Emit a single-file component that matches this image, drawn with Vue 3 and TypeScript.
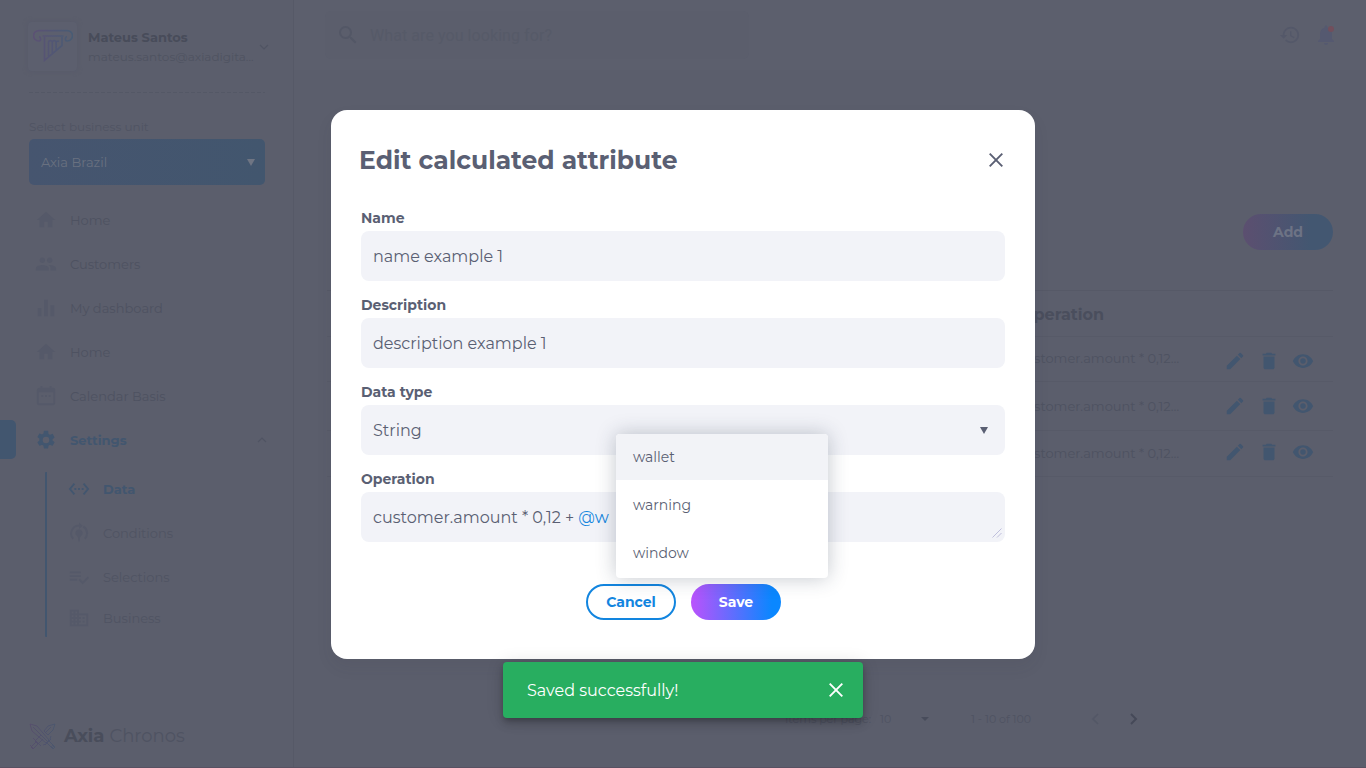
<script setup lang="ts">
interface MenuItem { label: string; icon: string; active?: boolean }

const icons: Record<string, string> = {
  home: 'M10 20v-6h4v6h5v-8h3L12 3 2 12h3v8z',
  people: 'M16 11c1.66 0 2.99-1.34 2.99-3S17.66 5 16 5c-1.66 0-3 1.34-3 3s1.34 3 3 3zm-8 0c1.66 0 2.99-1.34 2.99-3S9.66 5 8 5C6.34 5 5 6.34 5 8s1.34 3 3 3zm0 2c-2.33 0-7 1.17-7 3.5V19h14v-2.5c0-2.33-4.67-3.5-7-3.5zm8 0c-.29 0-.62.02-.97.05 1.16.84 1.97 1.97 1.97 3.45V19h6v-2.5c0-2.33-4.67-3.5-7-3.5z',
  chart: 'M3 12h4v9H3zM10 3h4v18h-4zM17 9h4v12h-4z',
  calendar: 'M9 11H7v2h2v-2zm4 0h-2v2h2v-2zm4 0h-2v2h2v-2zm3-8h-2V1h-2v2H8V1H6v2H5a3 3 0 0 0-3 3v14c0 1.1.9 2 2 2h16a2 2 0 0 0 2-2V5a2 2 0 0 0-2-2zm0 17H4V8h16v12z',
  settings: 'M19.14 12.94c.04-.3.06-.61.06-.94s-.02-.64-.07-.94l2.03-1.58c.18-.14.23-.41.12-.61l-1.92-3.32c-.12-.22-.37-.29-.59-.22l-2.39.96c-.5-.38-1.03-.7-1.62-.94l-.36-2.54A.48.48 0 0 0 13.92 2h-3.84c-.24 0-.43.17-.47.41l-.36 2.54c-.59.24-1.13.57-1.62.94l-2.39-.96c-.22-.08-.47 0-.59.22L2.74 8.47c-.12.21-.08.47.12.61l2.03 1.58c-.05.3-.09.63-.09.94s.02.64.07.94l-2.03 1.58c-.18.14-.23.41-.12.61l1.92 3.32c.12.22.37.29.59.22l2.39-.96c.5.38 1.03.7 1.62.94l.36 2.54c.05.24.24.41.48.41h3.84c.24 0 .44-.17.47-.41l.36-2.54c.59-.24 1.13-.56 1.62-.94l2.39.96c.22.08.47 0 .59-.22l1.92-3.32c.12-.22.07-.47-.12-.61l-2.01-1.58zM12 15.6A3.6 3.6 0 1 1 12 8.4a3.6 3.6 0 0 1 0 7.2z',
  data: 'M7.77 6.76 6.23 5.48.82 12l5.41 6.52 1.54-1.28L3.42 12l4.35-5.24zM7 13h2v-2H7v2zm10-2h-2v2h2v-2zm-6 2h2v-2h-2v2zm6.77-7.52-1.54 1.28L20.58 12l-4.35 5.24 1.54 1.28L23.18 12l-5.41-6.52z',
  conditions: 'M12 3V.5L16 4l-4 3.5V5a7.5 7.5 0 0 0-5.6 12.5L5 19A9.5 9.5 0 0 1 12 3zm5.5 1.2A9.5 9.5 0 0 1 19 19l-1.4-1.5a7.5 7.5 0 0 0-1.6-11.7zM12 8a4 4 0 0 1 2.2 7.3L13 17v3l-1 2-1-2v-3l-1.2-1.7A4 4 0 0 1 12 8z',
  selections: 'M14 10H2v2h12v-2zm0-4H2v2h12V6zM2 16h8v-2H2v2zm19.5-4.5L23 13l-6.99 7-4.51-4.5L13 14l3.01 3 5.49-5.5z',
  business: 'M12 7V3H2v18h20V7H12zM6 19H4v-2h2v2zm0-4H4v-2h2v2zm0-4H4V9h2v2zm0-4H4V5h2v2zm4 12H8v-2h2v2zm0-4H8v-2h2v2zm0-4H8V9h2v2zm0-4H8V5h2v2zm10 12h-8v-2h2v-2h-2v-2h2v-2h-2V9h8v10zm-2-8h-2v2h2v-2zm0 4h-2v2h2v-2z',
  search: 'M15.5 14h-.79l-.28-.27A6.471 6.471 0 0 0 16 9.5 6.5 6.5 0 1 0 9.5 16c1.61 0 3.09-.59 4.23-1.57l.27.28v.79l5 4.99L20.49 19l-4.99-5zm-6 0C7.01 14 5 11.99 5 9.5S7.01 5 9.5 5 14 7.01 14 9.5 11.99 14 9.5 14z',
  history: 'M13 3a9 9 0 0 0-9 9H1l3.89 3.89.07.14L9 12H6c0-3.87 3.13-7 7-7s7 3.13 7 7-3.13 7-7 7c-1.93 0-3.68-.79-4.94-2.06l-1.42 1.42A8.954 8.954 0 0 0 13 21a9 9 0 0 0 0-18zm-1 5v5l4.28 2.54.72-1.21-3.5-2.08V8H12z',
  bell: 'M12 22c1.1 0 2-.9 2-2h-4c0 1.1.89 2 2 2zm6-6v-5c0-3.07-1.64-5.64-4.5-6.32V4c0-.83-.67-1.5-1.5-1.5s-1.5.67-1.5 1.5v.68C7.63 5.36 6 7.92 6 11v5l-2 2v1h16v-1l-2-2z',
  edit: 'M3 17.25V21h3.75L17.81 9.94l-3.75-3.75L3 17.25zM20.71 7.04a.996.996 0 0 0 0-1.41l-2.34-2.34a.996.996 0 0 0-1.41 0l-1.83 1.83 3.75 3.75 1.83-1.83z',
  trash: 'M6 19c0 1.1.9 2 2 2h8c1.1 0 2-.9 2-2V7H6v12zM19 4h-3.5l-1-1h-5l-1 1H5v2h14V4z',
  eye: 'M12 4.5C7 4.5 2.73 7.61 1 12c1.73 4.39 6 7.5 11 7.5s9.27-3.11 11-7.5c-1.73-4.39-6-7.5-11-7.5zM12 17c-2.76 0-5-2.24-5-5s2.24-5 5-5 5 2.24 5 5-2.24 5-5 5zm0-8a3 3 0 1 0 0 6 3 3 0 0 0 0-6z',
}

const menu: MenuItem[] = [
  { label: 'Home', icon: 'home' },
  { label: 'Customers', icon: 'people' },
  { label: 'My dashboard', icon: 'chart' },
  { label: 'Home', icon: 'home' },
  { label: 'Calendar Basis', icon: 'calendar' },
  { label: 'Settings', icon: 'settings', active: true },
]
const submenu: MenuItem[] = [
  { label: 'Data', icon: 'data', active: true },
  { label: 'Conditions', icon: 'conditions' },
  { label: 'Selections', icon: 'selections' },
  { label: 'Business', icon: 'business' },
]
const fields = [
  { label: 'Name', value: 'name example 1', kind: 'text' },
  { label: 'Description', value: 'description example 1', kind: 'text' },
  { label: 'Data type', value: 'String', kind: 'select' },
  { label: 'Operation', value: 'customer.amount * 0,12 +', kind: 'area' },
]
const suggestions = ['wallet', 'warning', 'window']
const rowActions = ['edit', 'trash', 'eye']
</script>

<template>
  <div class="app">
    <aside class="sidebar">
      <div class="profile">
        <div class="avatar">
          <svg width="40" height="34" viewBox="0 0 40 34" fill="none" stroke="url(#pillar)" stroke-width="1.7">
            <defs>
              <linearGradient id="pillar" gradientUnits="userSpaceOnUse" x1="0" x2="40" y1="0" y2="0"><stop offset="0" stop-color="#5c5174" /><stop offset="1" stop-color="#485c74" /></linearGradient>
            </defs>
            <path d="M6 7.5c2 .5 2.500 4.500-.5 4.500a5.200 5.200 0 0 1 .5-10.400h28a5.200 5.200 0 0 1 .5 10.400c-3 0-2.500-4-.5-4.500M9.500 7h21M11.500 8v23.500l17.500-15V8M15.500 27V13.500a1.900 1.900 0 0 1 3.800 0V24M19.300 22V13.500a1.900 1.900 0 0 1 3.800 0V21M23.100 18V13.500a1.900 1.900 0 0 1 3 -1" />
          </svg>
        </div>
        <div class="who">
          <div class="who-name">Mateus Santos</div>
          <div class="who-mail">mateus.santos@axiadigita...</div>
        </div>
        <svg class="profile-chevron" width="10" height="8" viewBox="0 0 10 8"><path d="M1 2l4 4 4-4" fill="none" stroke="#505463" stroke-width="1.2" /></svg>
      </div>
      <div class="dashes"></div>
      <div class="unit-label">Select business unit</div>
      <div class="unit">
        <span>Axia Brazil</span>
        <svg width="8" height="7" viewBox="0 0 8 7"><path d="M0 0h8L4 7z" fill="#6f7583" /></svg>
      </div>
      <nav class="menu">
        <div v-for="(item, i) in menu" :key="i" class="item" :class="{ active: item.active }">
          <svg class="icon" viewBox="0 0 24 24"><path :d="icons[item.icon]" /></svg>
          <span>{{ item.label }}</span>
          <svg v-if="item.active" class="caret" width="10" height="8" viewBox="0 0 10 8"><path d="M1 6l4-4 4 4" fill="none" stroke="#505463" stroke-width="1.2" /></svg>
        </div>
      </nav>
      <div class="submenu">
        <div v-for="item in submenu" :key="item.label" class="subitem" :class="{ active: item.active }">
          <svg class="icon" viewBox="0 0 24 24"><path :d="icons[item.icon]" /></svg>
          <span>{{ item.label }}</span>
        </div>
      </div>
      <div class="brand">
        <svg width="27" height="27" viewBox="0 0 27 27" fill="none" stroke="url(#swords)" stroke-width=".9">
          <defs>
            <linearGradient id="swords" x1="0" x2="1"><stop offset="0" stop-color="#564d6c" /><stop offset="1" stop-color="#4a566e" /></linearGradient>
          </defs>
          <path d="M1 1l7 2 12 14-3 3L3 8zM4 4l14 14M26 1l-7 2-4 5 4 4 5-5zM22 4l-6 6M12 12l-6 6 3 3 5-5M16 22l6-6M17 19l6 6 2-2-6-6M4 15l8 8M7 19l-5 5 2 2 5-5M22 23l2 3 2-2-3-2M1 22l4 4M14 22l3-1M21 16l1-3" />
        </svg>
        <b>Axia</b><span>Chronos</span>
      </div>
    </aside>

    <main class="page">
      <header class="topbar">
        <div class="search">
          <svg width="24" height="24" viewBox="0 0 24 24"><path :d="icons.search" /></svg>
          <span>What are you looking for?</span>
        </div>
        <div class="top-icons">
          <svg width="22" height="22" viewBox="0 0 24 24"><path :d="icons.history" /></svg>
          <div class="bell">
            <svg width="24" height="24" viewBox="0 0 24 24"><path :d="icons.bell" /></svg>
            <i class="dot"></i>
          </div>
        </div>
      </header>
      <div class="toolbar"><button class="add">Add</button></div>
      <div class="table">
        <div class="thead">Operation</div>
        <div v-for="n in 3" :key="n" class="trow" :class="'trow-' + n">
          <span class="cell">customer.amount * 0,12…</span>
          <span class="actions">
            <svg v-for="a in rowActions" :key="a" width="22" height="22" viewBox="0 0 24 24"><path :d="icons[a]" /></svg>
          </span>
        </div>
      </div>
      <footer class="pager">
        <span class="per">Items per page:</span>
        <span class="ten">10</span>
        <svg class="drop" width="8" height="4" viewBox="0 0 8 4"><path d="M0 0h8L4 4z" fill="#484c5b" /></svg>
        <span class="range">1 - 10 of 100</span>
        <svg class="prev" width="8" height="12" viewBox="0 0 8 12"><path d="M7 1L2 6l5 5" fill="none" stroke="#535766" stroke-width="1.6" /></svg>
        <svg class="next" width="8" height="12" viewBox="0 0 8 12"><path d="M1 1l5 5-5 5" fill="none" stroke="#454958" stroke-width="1.9" /></svg>
      </footer>
    </main>

    <section class="modal">
      <div class="modal-head">
        <h1>Edit calculated attribute</h1>
        <svg width="14" height="14" viewBox="0 0 14 14"><path d="M.7.7l12.600 12.600M13.300.7L.7 13.300" stroke="#5a5f73" stroke-width="1.9" /></svg>
      </div>
      <div class="form">
        <div v-for="f in fields" :key="f.label" class="field">
          <div class="label">{{ f.label }}</div>
          <div class="control">
            <span>{{ f.value }}</span>
            <span v-if="f.kind === 'area'" class="mention">@w</span>
            <svg v-if="f.kind === 'select'" class="arrow" width="8" height="7" viewBox="0 0 8 7"><path d="M0 0h8L4 7z" fill="#5a5f73" /></svg>
            <svg v-if="f.kind === 'area'" class="grip" width="10" height="10" viewBox="0 0 10 10"><path d="M.5 9.500l9-9M5 9.500L9.500 5" stroke="#b9b9d8" stroke-width=".9" /></svg>
          </div>
        </div>
      </div>
      <div class="buttons">
        <button class="cancel">Cancel</button>
        <button class="save">Save</button>
      </div>
      <div class="suggest">
        <div v-for="s in suggestions" :key="s" class="option">{{ s }}</div>
      </div>
    </section>

    <div class="toast">
      <span>Saved successfully!</span>
      <svg width="14" height="14" viewBox="0 0 14 14"><path d="M.7.7l12.600 12.600M13.300.7L.7 13.300" stroke="#fff" stroke-width="1.9" /></svg>
    </div>
  </div>
</template>

<style>
body { margin: 0; background: #5b5e6c; }
</style>

<style scoped>
* { box-sizing: border-box; }
svg { display: block; flex: none; }
button { border: 0; padding: 0; font: inherit; }
.app { position: relative; display: flex; width: 1366px; height: 768px; overflow: hidden; background: #5b5e6c; color: #4f5362; font-family: Montserrat, Inter, "Open Sans", sans-serif; font-size: 13px; font-weight: 400; white-space: nowrap; }
.app::after { content: ""; position: absolute; left: 0; right: 0; bottom: 0; height: 1px; background: #585162; }

.sidebar { flex: none; display: flex; flex-direction: column; width: 294px; height: 768px; border-right: 1px solid #565967; }
.profile { display: flex; align-items: center; height: 92px; padding-left: 28px; }
.avatar { display: grid; place-items: center; width: 49px; height: 49px; border-radius: 4px; background: #5c5f6e; box-shadow: 0 0 5px #575a69; }
.who { width: 165px; margin-left: 11px; padding-top: 2px; }
.who div { height: 20px; line-height: 20px; }
.who-name { font-weight: 700; color: #484c5a; }
.who-mail { font-size: 12px; color: #4f5361; }
.profile-chevron { margin-left: 6px; margin-top: 2px; }
.dashes { width: 236px; height: 1px; margin-left: 29px; background: repeating-linear-gradient(90deg, #545866 0 4px, transparent 4px 6px); }
.unit-label { height: 20px; margin: 24px 0 0 29px; line-height: 20px; font-size: 12px; color: #505463; }
.unit { display: flex; align-items: center; justify-content: space-between; width: 236px; height: 46px; margin: 2px 0 0 29px; padding: 0 10px 0 12px; border-radius: 5px; background: linear-gradient(90deg, #46556f, #42566e); color: #697180; }
.menu { margin-top: 13px; }
.item { display: flex; align-items: center; height: 44px; padding-left: 35px; color: #4e5261; }
.icon { width: 22px; height: 22px; fill: #555969; }
.item .icon { margin-right: 13px; }
.item.active, .subitem.active { font-weight: 700; color: #42566f; }
.item.active { padding-left: 0; }
.item.active::before { content: ""; width: 16px; height: 39px; margin: 0 19px 1px 0; border-radius: 0 5px 5px 0; background: #42566f; }
.active .icon { fill: #42566f; }
.caret { margin-left: auto; margin-right: 26px; }
.submenu { width: 220px; height: 165px; margin: 10px 0 0 45px; border-left: 2px solid #42566f; border-radius: 1px; }
.subitem { display: flex; align-items: center; height: 44px; padding-left: 21px; color: #505463; }
.subitem:first-child { margin-top: -5px; }
.subitem:last-child { height: 38px; }
.subitem .icon { margin-right: 13px; }
.brand { display: flex; align-items: center; height: 28px; margin: auto 0 18px 29px; font-size: 18px; color: #4f5362; }
.brand b { margin: 0 5px 0 8px; font-weight: 700; color: #494d5b; }

.page { flex: none; display: flex; flex-direction: column; width: 1072px; }
.topbar { display: flex; justify-content: space-between; height: 70px; padding: 11px 28px 11px 31px; background: #5c5f6d; }
.search { display: flex; align-items: center; width: 424px; height: 48px; padding-left: 11px; border-radius: 6px; background: #5b5e6c; font-family: Roboto, sans-serif; font-size: 16px; letter-spacing: .07px; color: #565a68; }
.search svg { margin-right: 10px; fill: #535766; }
.top-icons { display: flex; align-items: center; gap: 13px; fill: #545869; }
.bell { position: relative; }
.bell svg { fill: #555970; }
.dot { position: absolute; right: 4px; top: 3px; width: 6px; height: 6px; border-radius: 50%; background: #724f5c; }
.toolbar { display: flex; justify-content: flex-end; height: 220px; padding: 144px 33px 0 0; }
.add { width: 90px; height: 36px; border-radius: 18px; background: linear-gradient(90deg, #5c4f70, #435771 75%); color: #6d7385; font-size: 14px; font-weight: 700; }
.table { width: 1006px; margin-left: 33px; border-top: 1px solid #565967; }
.thead, .trow { border-bottom: 1px solid #575a68; padding-left: 691px; }
.thead { height: 46px; padding-left: 693px; line-height: 47px; font-size: 16px; font-weight: 700; color: #4a4e5d; }
.trow { display: flex; height: 45px; color: #4e5261; }
.trow-2 { height: 49px; }
.trow-3 { height: 46px; }
.cell { flex: none; width: 206px; line-height: 43px; }
.trow-2 .cell { line-height: 48px; }
.trow-3 .cell { line-height: 44px; }
.actions { display: flex; align-items: flex-start; gap: 12px; padding-top: 13px; fill: #42566f; }
.trow-3 .actions { padding-top: 10px; }
.pager { display: flex; align-items: center; height: 20px; margin-top: 232px; padding-left: 491px; font-size: 11px; color: #4f5362; }
.per { width: 95px; }
.ten { width: 41px; }
.range { margin-left: 42px; width: 59px; }
.prev { margin-left: 61px; }
.next { margin-left: 31px; }

.modal { position: absolute; left: 331px; top: 110px; width: 704px; height: 549px; padding: 28px 30px 0; border-radius: 16px; background: #fff; color: #5a5f73; box-shadow: 0 8px 16px rgba(50, 54, 70, .08); }
.modal-head { display: flex; align-items: center; justify-content: space-between; height: 44px; padding-right: 2px; }
h1 { margin: 0 0 0 -2px; font-size: 25px; line-height: 44px; font-weight: 700; }
.form { padding-top: 25px; }
.field { margin-bottom: 13px; }
.label { height: 24px; line-height: 22px; font-size: 14px; font-weight: 700; }
.control { position: relative; display: flex; align-items: center; height: 50px; padding: 0 12px; border-radius: 8px; background: #f2f3f8; font-size: 16px; }
.mention { margin-left: 4px; color: #1687de; }
.arrow { margin: 0 5px 0 auto; }
.grip { position: absolute; right: 3px; bottom: 4px; }
.buttons { display: flex; justify-content: center; gap: 15px; padding: 29px 0 0 1px; }
.buttons button { width: 90px; height: 36px; border-radius: 18px; font-size: 14px; font-weight: 700; }
.cancel { border: 2px solid #1285df; background: #fff; color: #1285df; }
.save { background: linear-gradient(90deg, #bb52fc, #0a87ff 90%); color: #fff; }
.suggest { position: absolute; left: 285px; top: 324px; width: 212px; height: 144px; border-radius: 4px; background: #fff; font-size: 14px; box-shadow: 0 0 20px rgba(40, 55, 75, .28); }
.option { height: 48px; padding-left: 17px; line-height: 46px; }
.option:first-child { height: 46px; margin-bottom: 2px; border-radius: 4px 4px 0 0; background: #f2f3f7; }
.option:last-child { height: 46px; }

.toast { position: absolute; left: 503px; top: 662px; display: flex; align-items: center; justify-content: space-between; width: 360px; height: 56px; padding: 0 20px 0 24px; border-radius: 4px; background: #28ae60; color: #fff; font-size: 16px; box-shadow: 0 3px 5px -1px rgba(0, 0, 0, .2), 0 6px 10px rgba(0, 0, 0, .14), 0 1px 18px rgba(0, 0, 0, .12); }
</style>
